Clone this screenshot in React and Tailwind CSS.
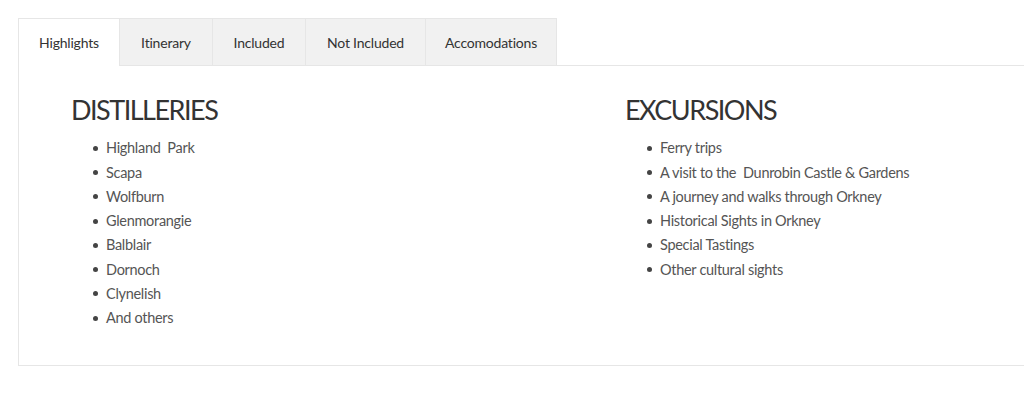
import React, { useState } from 'react';

const tabs = ['Highlights', 'Itinerary', 'Included', 'Not Included', 'Accomodations'];

const tabWidths = {
  Highlights: 'w-[102px]',
  Itinerary: 'w-[93px]',
  Included: 'w-[93px]',
  'Not Included': 'w-[120px]',
  Accomodations: 'w-[131px]',
};

const distilleries = ['Highland  Park', 'Scapa', 'Wolfburn', 'Glenmorangie', 'Balblair', 'Dornoch', 'Clynelish', 'And others'];

const excursions = [
  'Ferry trips',
  'A visit to the  Dunrobin Castle & Gardens',
  'A journey and walks through Orkney',
  'Historical Sights in Orkney',
  'Special Tastings',
  'Other cultural sights',
];

const List = ({ title, items }) => (
  <div>
    <h2 className="text-[27px] leading-[30px] text-[#333] font-normal tracking-[-1.5px]">{title}</h2>
    <ul className="mt-[11px] pl-[22px]">
      {items.map((item) => (
        <li key={item} className="flex items-center h-[24.3px] text-[14.5px] tracking-[-0.3px] text-[#555] whitespace-pre">
          <span className="w-[5px] h-[5px] rounded-full bg-[#444] mr-[8px]" />
          {item}
        </li>
      ))}
    </ul>
  </div>
);

const App = () => {
  const [active, setActive] = useState('Highlights');

  return (
    <div className="w-[1024px] h-[393px] bg-white overflow-hidden pt-[18px] pl-[18px]" style={{ fontFamily: 'Lato, sans-serif' }}>
      <div className="w-[1100px]">
        {/* Tabs */}
        <div className="flex h-[48px]">
          {tabs.map((tab) => (
            <button
              key={tab}
              onClick={() => setActive(tab)}
              className={`${tabWidths[tab]} h-[48px] text-[14px] tracking-[-0.2px] text-[#333] border-t border-r border-[#e6e6e6] ${
                tab === 'Highlights' ? 'border-l' : ''
              } ${active === tab ? 'bg-white' : 'bg-[#f1f1f1] border-b'}`}
            >
              {tab}
            </button>
          ))}
          <div className="flex-1 border-b border-[#e6e6e6]" />
        </div>

        {/* Content */}
        <div className="h-[300px] border-l border-b border-[#e6e6e6] flex pl-[52px] pt-[29px]">
          <div className="w-[554px]">
            <List title="DISTILLERIES" items={distilleries} />
          </div>
          <div>
            <List title="EXCURSIONS" items={excursions} />
          </div>
        </div>
      </div>
    </div>
  );
};

export default App;
